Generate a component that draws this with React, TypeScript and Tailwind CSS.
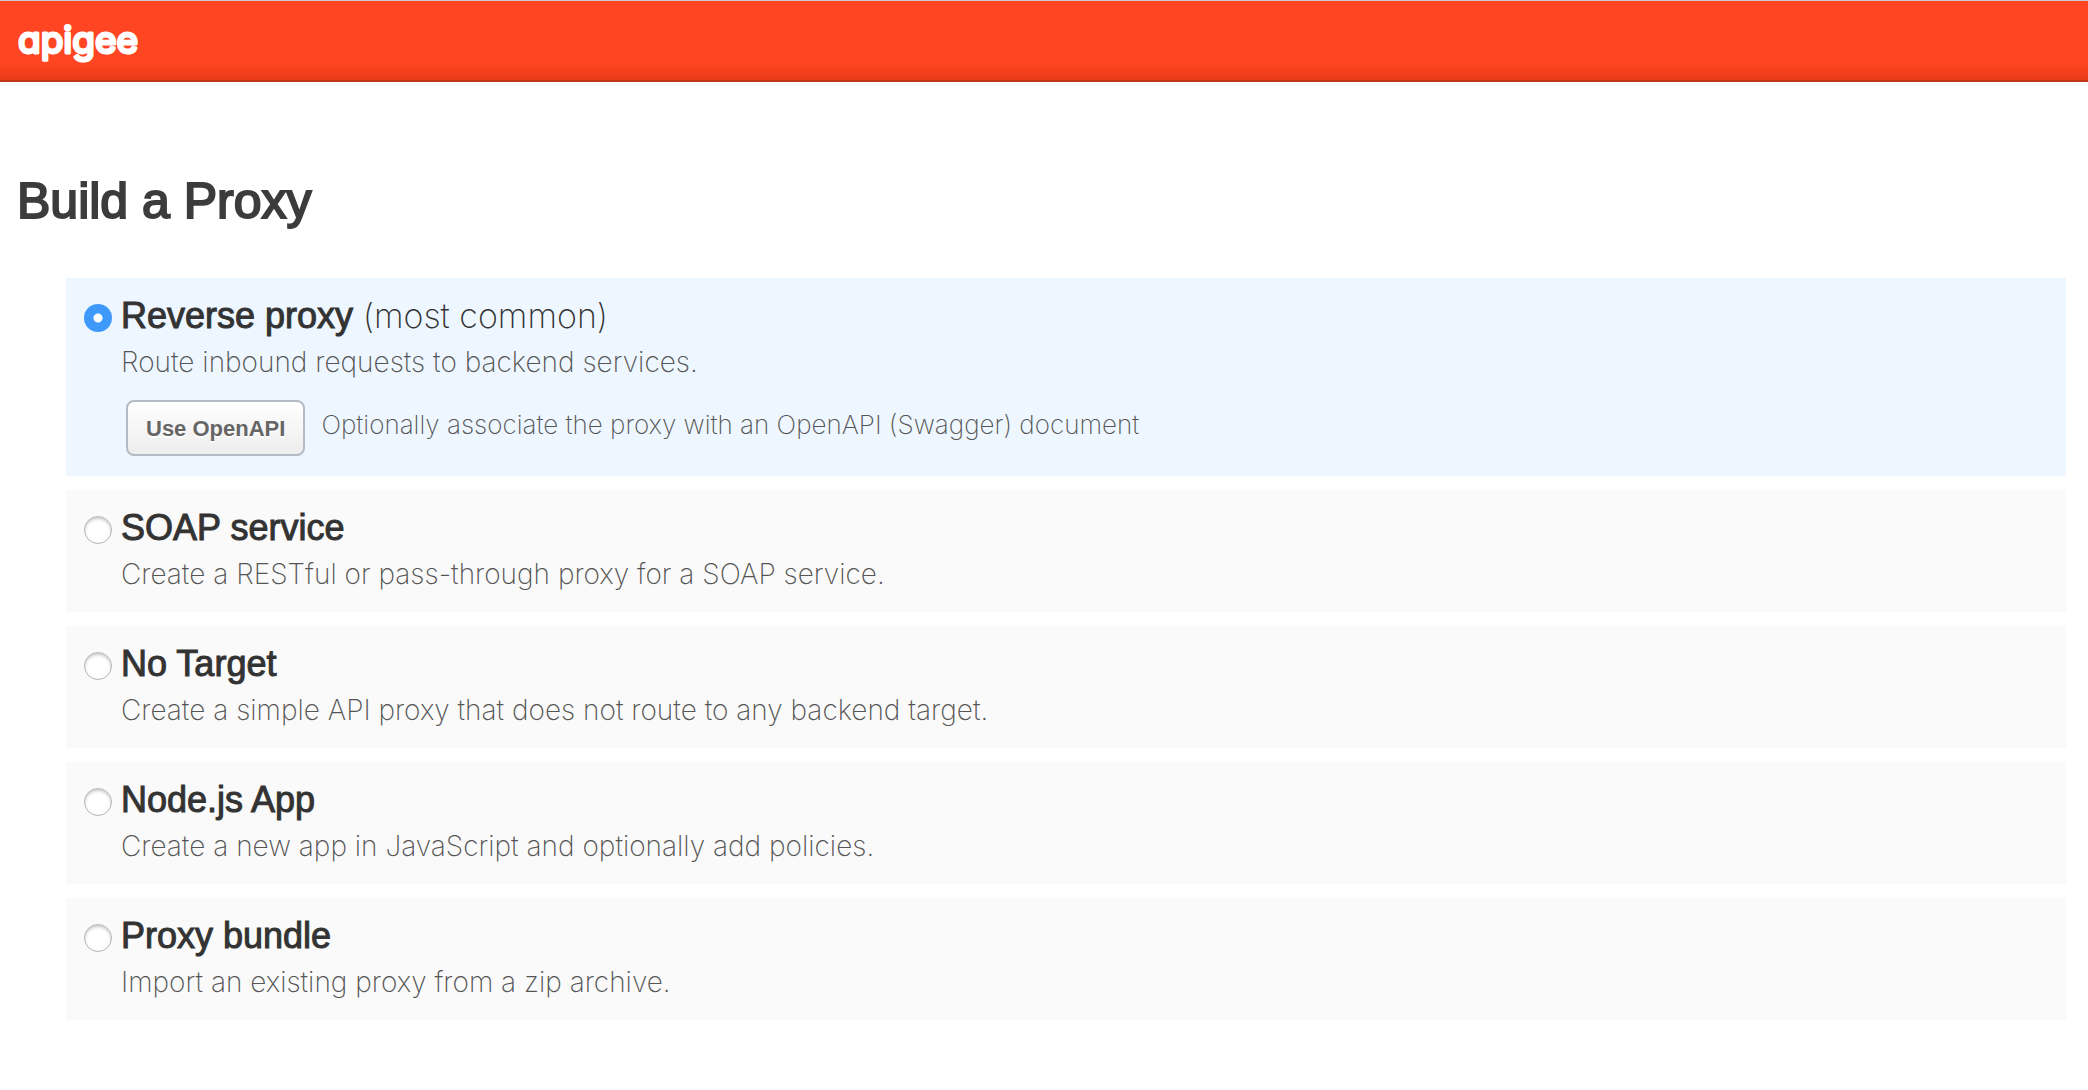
import { useState } from "react";
import type { ReactNode } from "react";

type Option = {
  id: string;
  title: string;
  note?: string;
  description: string;
  extra?: ReactNode;
};

const options: Option[] = [
  {
    id: "reverse",
    title: "Reverse proxy",
    note: "(most common)",
    description: "Route inbound requests to backend services.",
    extra: (
      <div className="mt-5 ml-[5px] flex items-start gap-4">
        <button
          type="button"
          className="h-14 shrink-0 rounded-lg border-2 border-[#b4bbc2] bg-linear-to-b from-white to-[#ededed] px-[18px] text-[22px] font-bold text-[#666] [text-shadow:0_2px_0_#fff]"
        >
          Use OpenAPI
        </button>
        <p className="font-[Inter,sans-serif] text-[26px] leading-[50px] font-extralight text-[#555]">
          Optionally associate the proxy with an OpenAPI (Swagger) document
        </p>
      </div>
    ),
  },
  {
    id: "soap",
    title: "SOAP service",
    description: "Create a RESTful or pass-through proxy for a SOAP service.",
  },
  {
    id: "none",
    title: "No Target",
    description: "Create a simple API proxy that does not route to any backend target.",
  },
  {
    id: "node",
    title: "Node.js App",
    description: "Create a new app in JavaScript and optionally add policies.",
  },
  {
    id: "bundle",
    title: "Proxy bundle",
    description: "Import an existing proxy from a zip archive.",
  },
];

function Logo() {
  return (
    <svg viewBox="0 0 130 56" className="h-14 w-[130px]" role="img" aria-label="apigee">
      <text
        x="0"
        y="36"
        fill="#fff"
        stroke="#fff"
        strokeWidth="3"
        strokeLinejoin="round"
        className="font-[Inter,sans-serif] text-[37px] font-normal [font-feature-settings:'cv11']"
      >
        apigee
      </text>
    </svg>
  );
}

function ProxyOption({
  option,
  checked,
  onSelect,
}: {
  option: Option;
  checked: boolean;
  onSelect: () => void;
}) {
  return (
    <div
      className={`flex items-start gap-[9px] pt-4 pr-5 pb-5 pl-[18px] ${checked ? "bg-[#eef7ff]" : "bg-[#fafafa]"}`}
    >
      <input
        type="radio"
        name="proxy-type"
        id={option.id}
        checked={checked}
        onChange={onSelect}
        className="mt-2.5 size-7 shrink-0 appearance-none rounded-full border border-[#b5b5b5] bg-white shadow-[inset_0_2px_3px_#ccc] checked:border-0 checked:bg-[radial-gradient(circle,#fff_4px,#3f99fa_5px)] checked:shadow-none"
      />
      <div className="min-w-0">
        <label htmlFor={option.id} className="block text-[36px] leading-[44px] text-[#333]">
          <span className="[-webkit-text-stroke:1px_#333]">{option.title}</span>
          {option.note && (
            <span className="font-[Inter,sans-serif] text-[34px] font-extralight"> {option.note}</span>
          )}
        </label>
        <p className="mt-1.5 font-[Inter,sans-serif] text-[28px] leading-9 font-extralight text-[#555]">
          {option.description}
        </p>
        {option.extra}
      </div>
    </div>
  );
}

export default function App() {
  const [selected, setSelected] = useState("reverse");
  return (
    <div className="min-h-screen bg-white font-['Liberation_Sans',Arial,sans-serif]">
      <header className="h-[82px] border-t border-b-2 border-t-[#c9c9c9] border-b-[#bd371c] bg-[linear-gradient(to_bottom,#ff4521_0,#ff4521_62px,#e83a1a_100%)] px-[18px] pt-[16px]">
        <Logo />
      </header>
      <main className="pt-[87px] pr-[22px]">
        <h1 className="pl-[17px] text-[50px] leading-[64px] text-[#3c3c3c] [-webkit-text-stroke:2px_#3c3c3c]">
          Build a Proxy
        </h1>
        <form className="mt-[45px] ml-[66px] flex flex-col gap-3.5">
          {options.map((option) => (
            <ProxyOption
              key={option.id}
              option={option}
              checked={selected === option.id}
              onSelect={() => setSelected(option.id)}
            />
          ))}
        </form>
      </main>
    </div>
  );
}
